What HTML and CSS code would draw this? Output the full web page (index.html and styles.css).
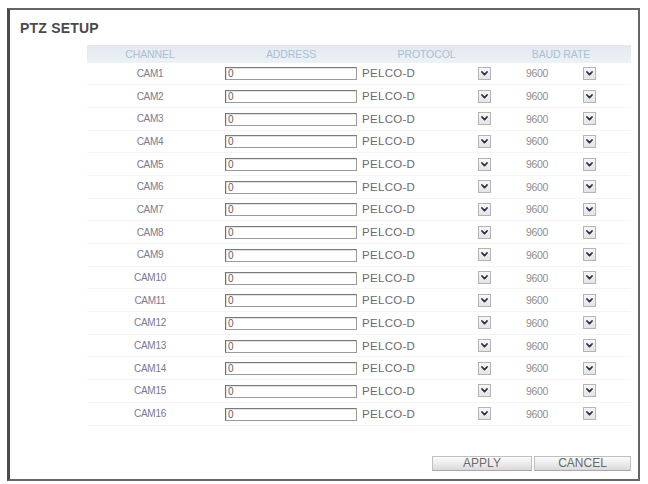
FILE: index.html
```html
<!DOCTYPE html>
<html>
<head>
<meta charset="utf-8">
<title>PTZ Setup</title>
<link rel="stylesheet" href="styles.css">
</head>
<body>
<div class="panel">
  <h1 class="title">PTZ SETUP</h1>
  <div class="table">
    <div class="row head">
      <div class="c-ch">CHANNEL</div>
      <div class="c-addr"><span class="hcell">ADDRESS</span></div>
      <div class="c-proto"><span class="hcell">PROTOCOL</span></div>
      <div class="c-baud"><span class="hcell">BAUD RATE</span></div>
    </div>
    <div id="rows"></div>
  </div>
  <div class="actions">
    <button class="btn btn-apply">APPLY</button>
    <button class="btn btn-cancel">CANCEL</button>
  </div>
</div>
<template id="row-tpl">
  <div class="row">
    <div class="c-ch cam"></div>
    <div class="c-addr"><input class="addr" type="text" value="0"></div>
    <div class="c-proto"><span class="proto">PELCO-D</span><span class="drop"><svg width="7" height="5" viewBox="0 0 7 5"><path d="M1 1 L3.5 3.6 L6 1" fill="none" stroke="#27324c" stroke-width="1.8" stroke-linecap="round" stroke-linejoin="round"/></svg></span></div>
    <div class="c-baud"><span class="baud">9600</span><span class="drop"><svg width="7" height="5" viewBox="0 0 7 5"><path d="M1 1 L3.5 3.6 L6 1" fill="none" stroke="#27324c" stroke-width="1.8" stroke-linecap="round" stroke-linejoin="round"/></svg></span></div>
  </div>
</template>
<script src="app.js"></script>
</body>
</html>
```
FILE: app.js
```js
// Build one settings row per camera channel.
const rows = document.getElementById('rows');
const tpl = document.getElementById('row-tpl');
for (let i = 1; i <= 16; i++) {
  const row = tpl.content.firstElementChild.cloneNode(true);
  row.querySelector('.cam').textContent = 'CAM' + i;
  rows.appendChild(row);
}
```
FILE: styles.css
```css
html, body {
  margin: 0;
  padding: 0;
  background: #fff;
}

body {
  font-family: "Liberation Sans", Arial, sans-serif;
}

.panel {
  box-sizing: border-box;
  width: 633px;
  height: 473px;
  margin: 8px 0 0 7px;
  border: 2px solid #666;
  border-left: 3px solid #4a4a4a;
  display: flex;
  flex-direction: column;
}

.title {
  margin: 10px 0 0 10px;
  font-size: 14px;
  line-height: 16px;
  font-weight: bold;
  color: #4a4a4a;
  letter-spacing: 0.2px;
}

.table {
  width: 544px;
  margin: 9px 0 0 77px;
}

.row {
  display: grid;
  grid-template-columns: 126px 144px 134px 105px 1fr;
  align-items: center;
  height: 22.7px;
  border-bottom: 1px solid #f4f4f4;
  box-sizing: border-box;
}

.row.head {
  height: 17.5px;
  border-bottom: 0;
  background: linear-gradient(#e2e9ef, #edf2f6);
  color: #a9c0d5;
  font-size: 10.5px;
  letter-spacing: -0.1px;
}

.c-ch {
  text-align: center;
}

.c-addr {
  padding-left: 12px;
}

.c-proto {
  padding-left: 5px;
  display: flex;
  align-items: center;
  justify-content: space-between;
}

.c-baud {
  padding-left: 35px;
  display: flex;
  align-items: center;
  justify-content: space-between;
}

.hcell {
  flex: 1;
  text-align: center;
}

.c-addr .hcell {
  display: block;
  width: 132px;
}

.cam {
  font-size: 10px;
  color: #7a7a92;
  letter-spacing: -0.3px;
}

.addr {
  box-sizing: border-box;
  display: block;
  width: 132px;
  height: 13px;
  margin: 1px 0 0;
  padding: 0 2px;
  border: 1px solid #9a9a9a;
  border-left-color: #707070;
  border-top-color: #7a7a7a;
  box-shadow: inset 1px 1px 0 #e2e2e2;
  background: #fff;
  font-family: "Liberation Sans", Arial, sans-serif;
  font-size: 10px;
  line-height: 11px;
  color: #606060;
  outline: none;
}

.proto {
  font-size: 11.5px;
  color: #6a6a6a;
  letter-spacing: 0.3px;
}

.baud {
  font-size: 10.5px;
  color: #8e8e8e;
  letter-spacing: -0.3px;
}

.drop {
  box-sizing: border-box;
  width: 13px;
  height: 13px;
  border: 1px solid #b4b4b4;
  background: linear-gradient(#f7f7f7, #e4e4e4);
  display: flex;
  align-items: center;
  justify-content: center;
}

.actions {
  display: flex;
  justify-content: flex-end;
  gap: 2px;
  width: 544px;
  margin: 30px 0 0 77px;
}

.btn {
  box-sizing: border-box;
  height: 15px;
  padding: 0;
  border: 1px solid #c0c0c0;
  border-bottom-color: #a8a8a8;
  background: linear-gradient(#fbfbfb, #e9e9e9 60%, #d9d9d9);
  font-family: "Liberation Sans", Arial, sans-serif;
  font-size: 12px;
  line-height: 13px;
  color: #6a6a6a;
}

.btn-apply {
  width: 100px;
}

.btn-cancel {
  width: 97px;
}
```
